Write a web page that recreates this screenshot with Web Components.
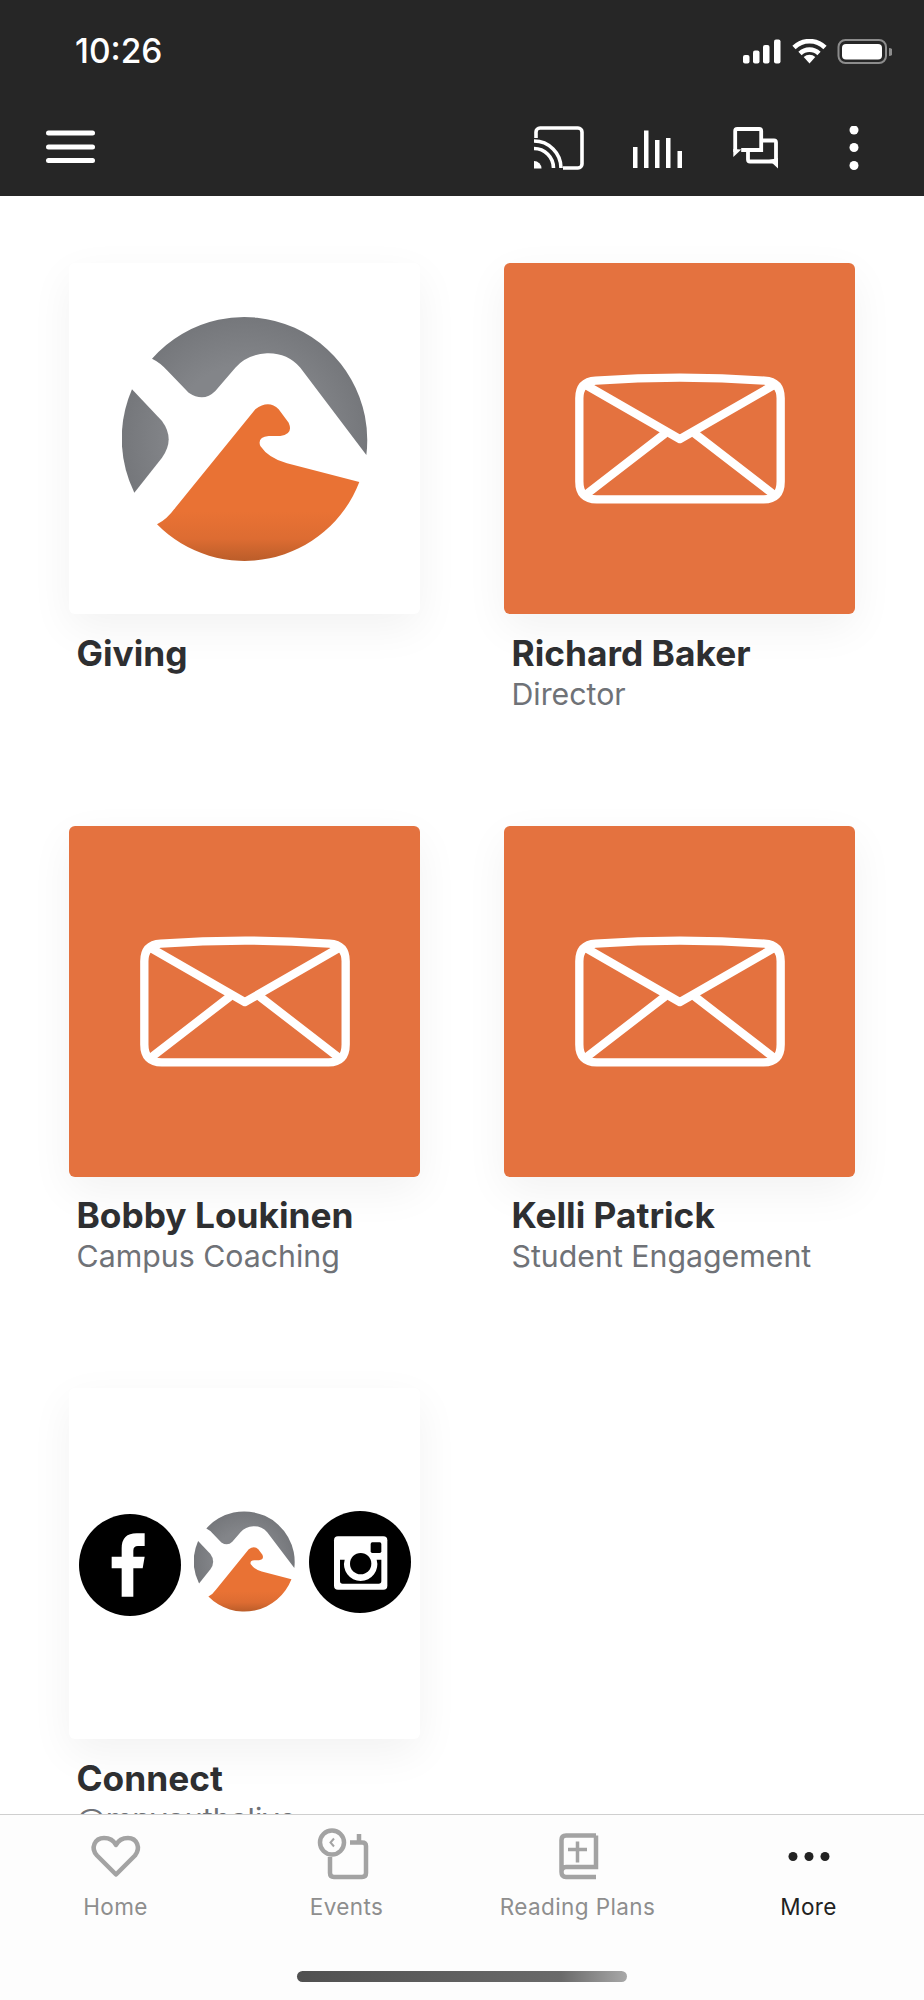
<!DOCTYPE html>
<html lang="en">
<head>
<meta charset="utf-8">
<title>More</title>
<style>
  html, body { margin: 0; height: 2000px; background: #fff; }
  body { font-family: Inter, "Liberation Sans", sans-serif; }
</style>
</head>
<body>
<app-shell>
  <status-bar slot="top"></status-bar>
  <top-bar slot="top"></top-bar>
  <tile-grid>
    <grid-tile name="Giving"><brand-logo></brand-logo></grid-tile>
    <grid-tile name="Richard Baker" sub="Director" tone="orange"><mail-icon></mail-icon></grid-tile>
    <grid-tile name="Bobby Loukinen" sub="Campus Coaching" tone="orange"><mail-icon></mail-icon></grid-tile>
    <grid-tile name="Kelli Patrick" sub="Student Engagement" tone="orange"><mail-icon></mail-icon></grid-tile>
    <grid-tile name="Connect" sub="@mpyouthalive"><social-row></social-row></grid-tile>
  </tile-grid>
  <tab-bar slot="bottom"></tab-bar>
</app-shell>

<script>
const shell = document.createElement('template')
shell.innerHTML = `
  <style>
    :host { display: flex; flex-direction: column; height: 2000px; overflow: hidden; }
    main { flex: 1; min-height: 0; overflow: hidden; }
  </style>
  <slot name="top"></slot>
  <main><slot></slot></main>
  <slot name="bottom"></slot>
`
customElements.define('app-shell',
  class extends HTMLElement {
    constructor () {
      super()
      this.attachShadow({ mode: 'open' })
        .appendChild(shell.content.cloneNode(true))
    }
  })

const statusTemplate = document.createElement('template')
statusTemplate.innerHTML = `
  <style>
    :host { display: flex; justify-content: space-between; align-items: flex-start; height: 86px; background: #262626; color: #fff; }
    .time { margin: 33px 0 0 75px; font: 500 33.500px/36px Inter, "Liberation Sans", sans-serif; }
    svg { margin: 39px 32px 0 0; display: block; }
  </style>
  <span class="time">10:26</span>
  <svg width="150" height="25" viewBox="742 39 150 25">
    <g fill="#fff">
      <rect x="743" y="55" width="6.5" height="8.5" rx="2"/>
      <rect x="753" y="50.5" width="6.5" height="13" rx="2"/>
      <rect x="763" y="45" width="6.5" height="18.5" rx="2"/>
      <rect x="774" y="39.5" width="6.5" height="24" rx="2"/>
      <path d="M809.5 63.5l-5.8-6.500a8.500 8.500 0 0 1 11.600 0z"/>
    </g>
    <g fill="none" stroke="#fff" stroke-width="4.600">
      <path d="M800 53.500a13.500 13.500 0 0 1 19 0"/>
      <path d="M794 47.500a22 22 0 0 1 31 0"/>
    </g>
    <rect x="838.5" y="40" width="47.5" height="23" rx="7" fill="none" stroke="#8c8c8c" stroke-width="2"/>
    <rect x="842" y="44" width="40" height="15.5" rx="4" fill="#fff"/>
    <path d="M889 48v8a4 4 0 0 0 0-8z" fill="#8c8c8c"/>
  </svg>
`
customElements.define('status-bar',
  class extends HTMLElement {
    constructor () {
      super()
      this.attachShadow({ mode: 'open' })
        .appendChild(statusTemplate.content.cloneNode(true))
    }
  })

const topTemplate = document.createElement('template')
topTemplate.innerHTML = `
  <style>
    :host { display: flex; height: 110px; background: #262626; padding-left: 45px; }
    svg { display: block; margin-top: 40px; }
    .menu { margin-top: 43px; }
    .cast { margin-left: 439px; }
    .bars { margin-left: 49px; }
    .chat { margin-left: 50px; }
    .dots { margin-left: 70px; }
  </style>
  <svg class="menu" width="50" height="36" viewBox="0 0 50 36" fill="#fff">
    <rect x="1" y="1.500" width="49" height="5" rx="2.500"/>
    <rect x="1" y="15.500" width="49" height="5" rx="2.500"/>
    <rect x="1" y="29" width="49" height="5" rx="2.500"/>
  </svg>
  <svg class="cast" width="50" height="44" viewBox="534 126 50 44">
    <path d="M536 138v-6a4 4 0 0 1 4-4h38a4 4 0 0 1 4 4v32a4 4 0 0 1-4 4h-15" fill="none" stroke="#fff" stroke-width="3.600"/>
    <path d="M534 141a27 27 0 0 1 27 27" fill="none" stroke="#fff" stroke-width="3.600"/>
    <path d="M534 148.500a19.500 19.500 0 0 1 19.500 19.500" fill="none" stroke="#fff" stroke-width="3.600"/>
    <path d="M534 161a7.500 7.500 0 0 1 7.500 7.500h-7.500z" fill="#fff"/>
  </svg>
  <svg class="bars" width="50" height="44" viewBox="633 126 50 44" fill="#fff">
    <rect x="633" y="147" width="4.500" height="21"/>
    <rect x="644" y="130.500" width="4.500" height="37.500"/>
    <rect x="655" y="140" width="4.500" height="28"/>
    <rect x="666" y="138" width="4.500" height="30"/>
    <rect x="677.500" y="151" width="4.500" height="17"/>
  </svg>
  <svg class="chat" width="46" height="44" viewBox="733 126 46 44">
    <path d="M735.200 152v-21a2 2 0 0 1 2-2h22a2 2 0 0 1 2 2v19h-20" fill="none" stroke="#fff" stroke-width="3.800"/>
    <path d="M733.300 149v8l8-7.500z" fill="#fff"/>
    <path d="M763 140.500h11a2 2 0 0 1 2 2v19h-26a2 2 0 0 1-2-2v-9" fill="none" stroke="#fff" stroke-width="3.800"/>
    <path d="M778 158v10.500l-9-8.500z" fill="#fff"/>
  </svg>
  <svg class="dots" width="10" height="44" viewBox="849 126 10 44" fill="#fff">
    <circle cx="854" cy="130" r="4.500"/>
    <circle cx="854" cy="147.500" r="4.500"/>
    <circle cx="854" cy="165.500" r="4.500"/>
  </svg>
`
customElements.define('top-bar',
  class extends HTMLElement {
    constructor () {
      super()
      this.attachShadow({ mode: 'open' })
        .appendChild(topTemplate.content.cloneNode(true))
    }
  })

const gridTemplate = document.createElement('template')
gridTemplate.innerHTML = `
  <style>
    :host { display: grid; grid-template-columns: 351px 351px; grid-auto-rows: 562.500px; column-gap: 84px; padding: 67px 69px 0; }
  </style>
  <slot></slot>
`
customElements.define('tile-grid',
  class extends HTMLElement {
    constructor () {
      super()
      this.attachShadow({ mode: 'open' })
        .appendChild(gridTemplate.content.cloneNode(true))
    }
  })

const tileTemplate = document.createElement('template')
tileTemplate.innerHTML = `
  <style>
    :host { display: block; }
    .box {
      display: flex;
      align-items: center;
      justify-content: center;
      height: 351px;
      border-radius: 6px;
      background: #fff;
      box-shadow: rgba(0, 0, 0, 0.055) 0px 14px 44px;
    }
    :host([tone="orange"]) .box { background: #e4723f; }
    .name { margin: 18.500px 0 0 7.500px; font: 700 35.300px/42px Inter, "Liberation Sans", sans-serif; color: #2e2f31; }
    .sub { margin: 0 0 0 7.500px; font: 400 30.300px/38px Inter, "Liberation Sans", sans-serif; color: #6f7277; }
  </style>
  <div class="box"><slot></slot></div>
  <div class="name"></div>
  <div class="sub"></div>
`
customElements.define('grid-tile',
  class extends HTMLElement {
    constructor () {
      super()
      this.attachShadow({ mode: 'open' })
        .appendChild(tileTemplate.content.cloneNode(true))
    }

    connectedCallback () {
      this.shadowRoot.querySelector('.name').textContent = this.getAttribute('name')
      this.shadowRoot.querySelector('.sub').textContent = this.getAttribute('sub') || ''
    }
  })

const mailTemplate = document.createElement('template')
mailTemplate.innerHTML = `
  <style>
    :host { display: block; width: 210px; height: 131px; }
    svg { display: block; }
  </style>
  <svg width="210" height="131" viewBox="253 370 631 392" fill="none" stroke="#fff" stroke-width="25" stroke-linecap="round" stroke-linejoin="round">
    <path d="M315 392Q568 374 822 392Q871 395 871 445V695Q871 749 820 749H318Q266 749 266 695V445Q266 395 315 392Z"/>
    <path d="M290 408L568 568L846 408"/>
    <path d="M288 733L522 552M848 733L614 552"/>
  </svg>
`
customElements.define('mail-icon',
  class extends HTMLElement {
    constructor () {
      super()
      this.attachShadow({ mode: 'open' })
        .appendChild(mailTemplate.content.cloneNode(true))
    }
  })

const logoTemplate = document.createElement('template')
logoTemplate.innerHTML = `
  <style>
    :host { display: block; width: var(--logo-size, 246px); height: var(--logo-size, 246px); }
    svg { display: block; width: 100%; height: 100%; }
  </style>
  <svg viewBox="185 195 738 738">
    <defs>
      <radialGradient id="grey" gradientUnits="userSpaceOnUse" cx="554" cy="564" r="369">
        <stop offset="0.6" stop-color="#838589"/>
        <stop offset="1" stop-color="#75777b"/>
      </radialGradient>
      <linearGradient id="orange" gradientUnits="userSpaceOnUse" x1="0" y1="700" x2="0" y2="933">
        <stop offset="0.35" stop-color="#e97234"/>
        <stop offset="0.7" stop-color="#dd6c32"/>
        <stop offset="1" stop-color="#b95c29"/>
      </linearGradient>
    </defs>
    <path fill="url(#grey)" d="M275 323A369 369 0 0 1 918 612L720 350Q680 305 620 307Q560 310 525 350L465 420Q430 455 385 425L320 358Q300 335 275 323Z"/>
    <path fill="url(#grey)" d="M215 415A369 369 0 0 0 222 725L305 620Q345 565 305 510Z"/>
    <path fill="url(#orange)" d="M290 820A369 369 0 0 0 897 693L680 637Q625 622 600 585Q590 558 625 555H660Q700 550 685 515L655 475Q625 445 585 475L345 770Q320 805 290 820Z"/>
  </svg>
`
customElements.define('brand-logo',
  class extends HTMLElement {
    constructor () {
      super()
      this.attachShadow({ mode: 'open' })
        .appendChild(logoTemplate.content.cloneNode(true))
    }
  })

const socialTemplate = document.createElement('template')
socialTemplate.innerHTML = `
  <style>
    :host { display: flex; align-items: flex-start; gap: 13.500px; --logo-size: 101px; }
    svg { display: block; }
    .fb { margin-top: 3px; }
  </style>
  <svg class="fb" width="102" height="102" viewBox="55 102 306 306">
    <circle cx="208" cy="255" r="153"/>
    <path fill="#fff" d="M183 350V265H153V230H183V205Q183 160 228 160H252V198H232Q218 198 218 212V230H252L246 265H218V350Z"/>
  </svg>
  <brand-logo></brand-logo>
  <svg width="102" height="102" viewBox="745 92 306 306">
    <circle cx="898" cy="245" r="153"/>
    <rect x="820" y="168" width="160" height="160" rx="12" fill="#fff"/>
    <rect x="930" y="186" width="32" height="32" rx="5"/>
    <path d="M838 238H852A50 50 0 1 0 948 238H962V302Q962 310 954 310H846Q838 310 838 302Z"/>
    <circle cx="900" cy="250" r="32"/>
  </svg>
`
customElements.define('social-row',
  class extends HTMLElement {
    constructor () {
      super()
      this.attachShadow({ mode: 'open' })
        .appendChild(socialTemplate.content.cloneNode(true))
    }
  })

const tabsTemplate = document.createElement('template')
tabsTemplate.innerHTML = `
  <style>
    :host { display: block; position: relative; height: 186px; box-sizing: border-box; border-top: 1.500px solid #cfcfcf; background: #fdfdfd; }
    nav { display: grid; grid-template-columns: repeat(4, 231px); }
    a { display: flex; flex-direction: column; align-items: center; font: 400 22.500px/28px Inter, "Liberation Sans", sans-serif; color: #8e8e8e; letter-spacing: 0.4px; }
    a.on { color: #222; }
    svg { display: block; overflow: visible; margin: 17px 0 9px; }
    .home { position: absolute; left: 297px; top: 156px; width: 330px; height: 11px; border-radius: 5.500px; background: linear-gradient(90deg, #505050, #6a6a6a 80%, #a8a8a8); }
  </style>
  <nav>
    <a>
      <svg width="50" height="52" viewBox="91 1832 50 52" fill="none" stroke="#a3a3a3" stroke-width="4.500" stroke-linejoin="round">
        <path d="M116 1874.500L97 1855.500C90 1848 95 1838 104 1838C110 1838 114 1841 116 1845C118 1841 122 1838 128 1838C137 1838 141 1848 135 1855.500Z"/>
      </svg>
      Home
    </a>
    <a>
      <svg width="50" height="52" viewBox="321 1832 50 52" fill="none" stroke="#a3a3a3" stroke-width="4.500">
        <circle cx="331" cy="1842.500" r="12"/>
        <path d="M333 1838.500L329.500 1842.500L333 1846.500" stroke-width="2"/>
        <path d="M329 1857V1873Q329 1877 333 1877H361Q365 1877 365 1873V1846Q365 1842.500 361 1842.500H349"/>
        <path d="M358 1834V1844"/>
      </svg>
      Events
    </a>
    <a>
      <svg width="50" height="52" viewBox="553 1832 50 52" fill="none" stroke="#a3a3a3" stroke-width="4.500">
        <path d="M596 1835.500H566Q561.500 1835.500 561.500 1840V1872Q561.500 1877 566 1877H596M561.500 1872Q561.500 1867 566 1867H596V1835.500"/>
        <path d="M577.500 1841.500V1862.500M568 1849.500H587" stroke-width="3.500"/>
      </svg>
      Reading Plans
    </a>
    <a class="on">
      <svg width="50" height="52" viewBox="783 1832 50 52" fill="#222">
        <circle cx="792" cy="1856.500" r="4.500"/>
        <circle cx="808" cy="1856.500" r="4.500"/>
        <circle cx="824" cy="1856.500" r="4.500"/>
      </svg>
      More
    </a>
  </nav>
  <div class="home"></div>
`
customElements.define('tab-bar',
  class extends HTMLElement {
    constructor () {
      super()
      this.attachShadow({ mode: 'open' })
        .appendChild(tabsTemplate.content.cloneNode(true))
    }
  })
</script>
</body>
</html>
